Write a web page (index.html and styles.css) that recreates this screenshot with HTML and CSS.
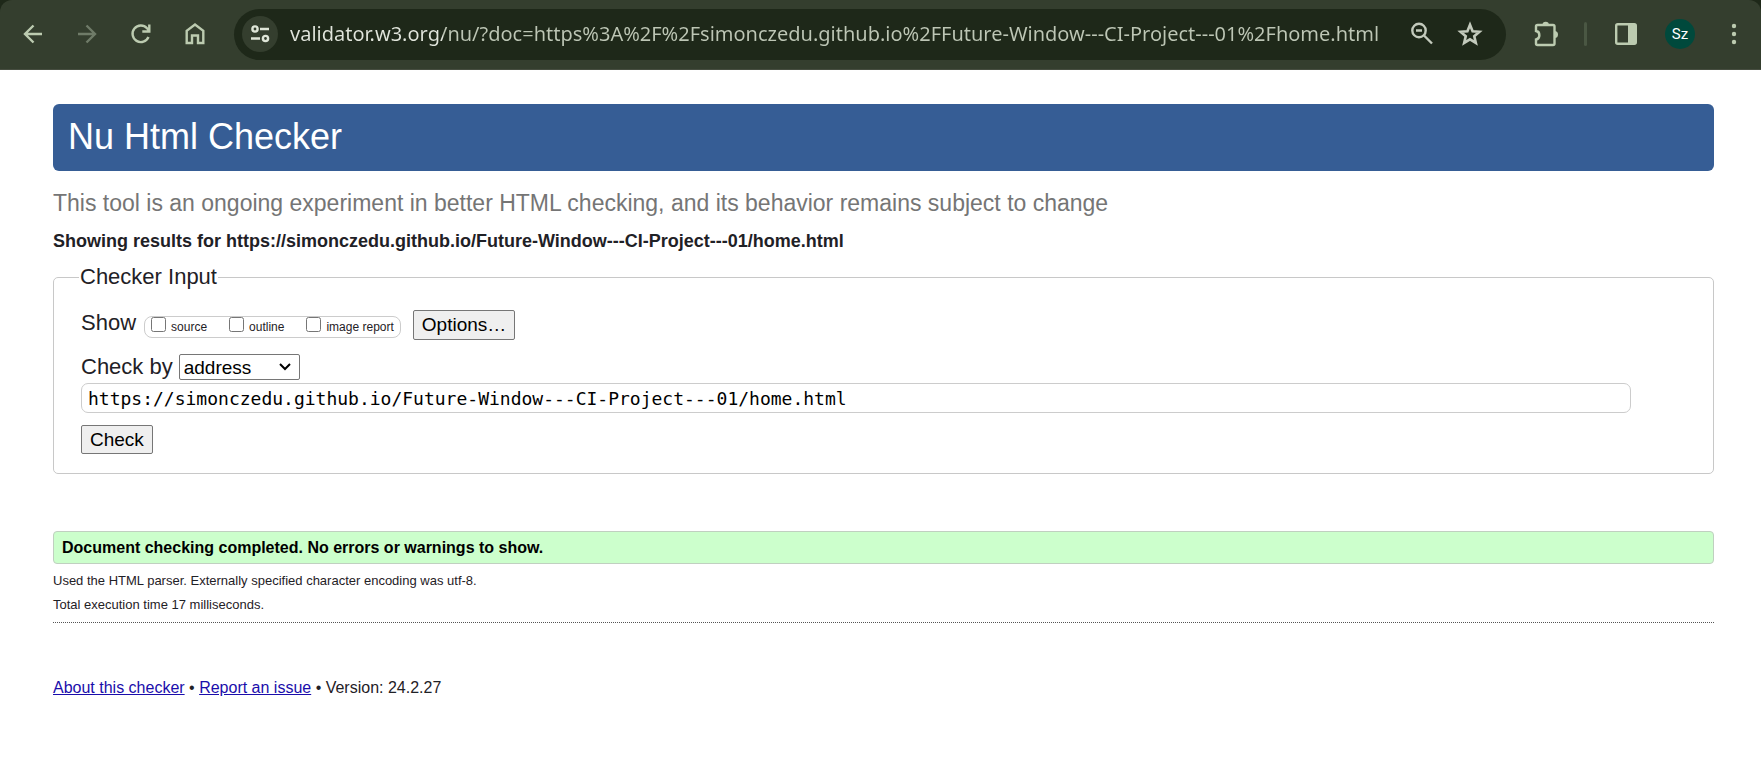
FILE: index.html
```html
<!DOCTYPE html>
<html lang="en">
<head>
<meta charset="utf-8">
<title>Showing results for https://simonczedu.github.io/Future-Window---CI-Project---01/home.html - Nu Html Checker</title>
<link rel="stylesheet" href="styles.css">
</head>
<body>
<div class="browser">
<nav class="toolbar" aria-label="Browser toolbar">
  <div class="nav-buttons">
    <button class="icon-button" aria-label="Back"><svg width="24" height="24" viewBox="0 0 24 24"><path d="M21 12H4M12.500 3.500 4 12l8.500 8.500"/></svg></button>
    <button class="icon-button faded" aria-label="Forward" disabled><svg width="24" height="24" viewBox="0 0 24 24"><path d="M3 12h17M11.500 3.500 20 12l-8.500 8.500"/></svg></button>
    <button class="icon-button" aria-label="Reload"><svg width="24" height="24" viewBox="0 0 24 24"><path d="M19.500 15A8.300 8.300 0 1 1 18 6.200L20 8.500M20.300 2.500v7h-7"/></svg></button>
    <button class="icon-button" aria-label="Home"><svg width="24" height="24" viewBox="0 0 24 24"><path d="M3.700 21V8.800L12 2.500l8.300 6.300V21H15v-7.500H9V21z"/></svg></button>
  </div>
  <div class="omnibox">
    <button class="icon-button site-info" aria-label="Site information"><svg width="22" height="22" viewBox="0 0 22 22"><circle cx="6" cy="6" r="2.600"/><path d="M11 6h9M2 15.500h9"/><circle cx="16.500" cy="15.500" r="2.600"/></svg></button>
    <input class="url" type="text" aria-label="Address bar" spellcheck="false" value="validator.w3.org/nu/?doc=https%3A%2F%2Fsimonczedu.github.io%2FFuture-Window---CI-Project---01%2Fhome.html">
    <div class="omnibox-actions">
      <button class="icon-button light" aria-label="Zoom"><svg width="26" height="26" viewBox="0 0 26 26"><circle cx="11" cy="9.500" r="6.700"/><path d="m16 14.500 8 8M8 9.500h6"/></svg></button>
      <button class="icon-button light" aria-label="Bookmark this tab"><svg width="26" height="26" viewBox="0 0 24 24"><path d="m12 3.500 2.400 5.900 6.300.500-4.800 4.100 1.500 6.200-5.400-3.300-5.400 3.300 1.500-6.200-4.800-4.100 6.300-.500z"/></svg></button>
    </div>
  </div>
  <button class="icon-button" aria-label="Extensions"><svg width="28" height="28" viewBox="0 0 28 28"><path d="M4 6.500Q4 5 5.500 5H21q1.500 0 1.500 1.500v17q0 1.500-1.500 1.500H5.500Q4 25 4 23.500V19.500c4.500-.500 4.500-8 0-8.500z"/><path class="solid" d="M10.500 5a3.200 3.200 0 0 1 6.400 0zM22.500 11a3.500 3.500 0 0 1 0 7z"/></svg></button>
  <span class="divider"></span>
  <button class="icon-button" aria-label="Side panel"><svg width="24" height="24" viewBox="0 0 24 24"><rect x="2.200" y="2.200" width="19.600" height="19.600" rx="1.500"/><path class="solid" d="M14 2h8v20h-8z"/></svg></button>
  <button class="avatar" aria-label="Profile">Sz</button>
  <button class="icon-button menu" aria-label="Menu"><svg width="24" height="24" viewBox="0 0 24 24"><circle class="solid" cx="12" cy="4" r="2.200"/><circle class="solid" cx="12" cy="12" r="2.200"/><circle class="solid" cx="12" cy="20" r="2.200"/></svg></button>
</nav>
</div>
<main class="page">
  <h1 class="banner">Nu Html Checker</h1>
  <p class="tagline">This tool is an ongoing experiment in better HTML checking, and its behavior remains subject to change</p>
  <h2 class="results-title">Showing results for https://simonczedu.github.io/Future-Window---CI-Project---01/home.html</h2>
  <form>
    <fieldset class="checker">
      <legend>Checker Input</legend>
      <div class="row show-row">
        <span class="show-label">Show</span>
        <div class="show-options">
          <label><input type="checkbox">source</label>
          <label><input type="checkbox">outline</label>
          <label><input type="checkbox">image report</label>
        </div>
        <button class="button" type="button">Options…</button>
      </div>
      <div class="row">
        <label for="method">Check by</label>
        <div class="select-wrap">
          <select id="method" class="method"><option>address</option><option>file upload</option><option>text input</option></select>
          <svg class="chevron" width="14" height="10" viewBox="0 0 14 10"><path d="m2 2 5 5 5-5"/></svg>
        </div>
      </div>
      <input class="doc" type="url" aria-label="Document address" spellcheck="false" value="https://simonczedu.github.io/Future-Window---CI-Project---01/home.html">
      <button class="button" type="button">Check</button>
    </fieldset>
  </form>
  <p class="success">Document checking completed. No errors or warnings to show.</p>
  <div class="details">
    <p>Used the HTML parser. Externally specified character encoding was utf-8.</p>
    <p>Total execution time 17 milliseconds.</p>
  </div>
  <footer class="about"><a href="#about">About this checker</a> • <a href="#issue">Report an issue</a> • Version: 24.2.27</footer>
</main>
</body>
</html>
```
FILE: styles.css
```css
* { box-sizing: border-box; }
body {
  margin: 0;
  background: #fff;
  color: #1f2126;
  font-family: "Liberation Sans", Arial, sans-serif;
}
h1, h2, p { margin: 0; }
button, input, select { font-family: inherit; }

.browser { background: #1e2819; }
.toolbar {
  display: flex;
  align-items: center;
  height: 70px;
  padding: 0 9px 1px 15px;
  background: #343e2e;
  border-bottom: 1px solid #464d40;
  border-radius: 12px 12px 0 0;
}
.nav-buttons { display: flex; gap: 18px; margin-right: 21px; }
.icon-button {
  display: flex;
  flex: none;
  align-items: center;
  justify-content: center;
  width: 36px;
  height: 36px;
  padding: 0;
  border: 0;
  border-radius: 50%;
  background: none;
  color: #bccbb0;
}
.icon-button svg { fill: none; stroke: currentColor; stroke-width: 2.4; }
.icon-button .solid { fill: currentColor; stroke: none; }
.faded { color: #6f7b68; }
.light { color: #c3cabc; }
.omnibox {
  display: flex;
  flex: 1;
  align-items: center;
  height: 51px;
  margin-right: 22px;
  padding: 0 18px 0 8px;
  border-radius: 26px;
  background: #1e2819;
}
.site-info { background: #343e2e; color: #dfe6d8; }
.url {
  flex: 1;
  min-width: 0;
  margin: 0 10px 0 12px;
  padding: 0;
  border: 0;
  outline: 0;
  background: linear-gradient(90deg, #e1e5dc 153px, #bdc6b5 153px);
  -webkit-background-clip: text;
  background-clip: text;
  color: transparent;
  font-family: "Noto Sans", "Segoe UI", sans-serif;
  font-size: 20px;
  line-height: 30px;
}
.omnibox-actions { display: flex; gap: 13px; }
.divider { width: 3px; height: 24px; margin: 0 21px 0 20px; border-radius: 2px; background: #4a5743; }
.avatar {
  width: 30px;
  height: 30px;
  margin: 0 21px;
  padding: 0;
  border: 0;
  border-radius: 50%;
  background: #00493c;
  color: #fff;
  font-family: Roboto, sans-serif;
  font-size: 15px;
}

.page { padding: 34px 47px 60px 53px; }
.banner {
  padding: 13px 15px 14px;
  border-radius: 6px;
  background: #365d95;
  color: #fff;
  font-size: 36px;
  font-weight: 400;
  line-height: 40px;
}
.tagline { margin-top: 18px; color: #757575; font-size: 23px; line-height: 28px; }
.results-title { margin-top: 14px; font-size: 18px; line-height: 20px; }
.checker {
  margin: 13px 0 0;
  padding: 20px 82px 19px 27px;
  border: 1px solid #c8c8c8;
  border-radius: 5px;
  font-size: 22px;
}
.checker legend { margin-left: -2px; padding: 0 1px; line-height: 26px; }
.row { display: flex; align-items: center; gap: 6px; line-height: 26px; }
.show-row { margin-bottom: 14px; }
.show-label { padding-bottom: 4px; }
.show-options {
  display: flex;
  align-items: center;
  gap: 22px;
  height: 22px;
  padding: 0 6px;
  margin: 3px 6px 0 2px;
  border: 1px solid #ccc;
  border-radius: 8px;
  font-size: 12px;
}
.show-options label { display: flex; align-items: center; gap: 5px; line-height: 20px; }
.show-options input { width: 15px; height: 15px; margin: 0 0 5px; }
.button {
  display: block;
  padding: 2px 8px;
  border: 1px solid #767676;
  border-radius: 2px;
  background: #efefef;
  color: #000;
  font-size: 19px;
  line-height: 23px;
}
.show-row .button { line-height: 24px; }
.select-wrap { display: grid; align-items: center; }
.method, .chevron { grid-area: 1 / 1; }
.method {
  appearance: none;
  width: 121px;
  height: 26px;
  padding: 0 4px;
  border: 1px solid #767676;
  border-radius: 2px;
  background: #fff;
  color: #000;
  font-size: 19px;
}
.chevron { justify-self: end; margin-right: 8px; fill: none; stroke: #000; stroke-width: 2; pointer-events: none; }
.doc {
  display: block;
  width: 100%;
  height: 30px;
  margin: 3px 0 12px;
  padding: 0 6px;
  border: 1px solid #ccc;
  border-radius: 7px;
  background: #fff;
  color: #000;
  font-family: Consolas, "DejaVu Sans Mono", monospace;
  font-size: 18px;
}
.success {
  margin-top: 57px;
  padding: 6px 8px;
  border: 1px solid #c0d0c0;
  border-radius: 4px;
  background: #ccffcc;
  color: #000;
  font-size: 16px;
  font-weight: 700;
  line-height: 19px;
}
.details { padding: 5px 0; border-bottom: 1px dotted #555; font-size: 13px; line-height: 24px; }
.about { margin-top: 54px; font-size: 16px; line-height: 22px; }
.about a { color: #1a0dab; }
```
